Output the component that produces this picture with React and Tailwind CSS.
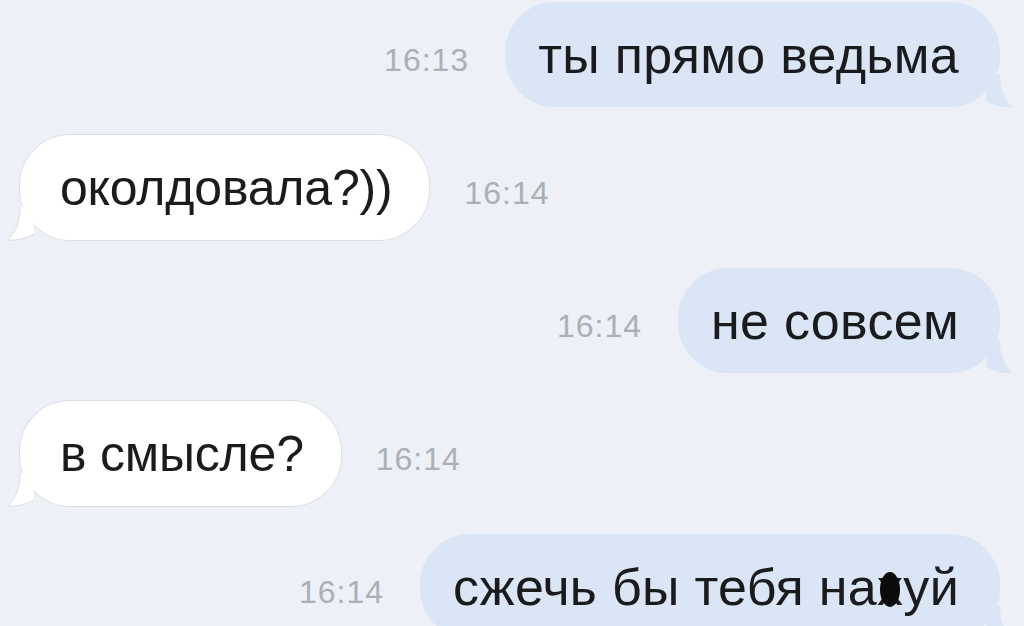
import React from 'react';

const messages = [
  { id: 1, out: true, text: 'ты прямо ведьма', time: '16:13' },
  { id: 2, out: false, text: 'околдовала?))', time: '16:14' },
  { id: 3, out: true, text: 'не совсем', time: '16:14' },
  { id: 4, out: false, text: 'в смысле?', time: '16:14' },
  { id: 5, out: true, text: 'сжечь бы тебя на', censored: 'х', rest: 'уй', time: '16:14' },
];

// little hook at the bottom corner of a bubble
const Tail = ({ out }) => {
  if (out) {
    return (
      <svg
        className="absolute right-[-13px] bottom-[-1px]"
        width="32"
        height="34"
        viewBox="0 0 32 34"
      >
        <path d="M6 0 L19 0 C19 14 23 26 32 33 C22 34 13 31 5 27 Z" fill="#dae5f5" />
      </svg>
    );
  }
  return (
    <svg
      className="absolute left-[-13px] bottom-[-1px]"
      width="32"
      height="34"
      viewBox="0 0 32 34"
    >
      <path d="M26 0 L13 0 C13 14 9 26 0 33 C10 34 19 31 27 27 Z" fill="#ffffff" />
      <path d="M13 0 C13 14 9 26 0.5 33 C10 34 19 31 27 27" fill="none" stroke="#dcdfe5" strokeWidth="1" />
    </svg>
  );
};

const Time = ({ value }) => (
  <span className="pt-[10px] font-['Liberation_Sans',Arial,sans-serif] text-[32px] leading-none text-[#abafb6] tracking-[1px]">
    {value}
  </span>
);

const Bubble = ({ msg }) => (
  <div
    className={
      msg.out
        ? 'relative h-[105px] flex items-center pl-[33px] pr-[41px] rounded-[50px] bg-[#dae5f5]'
        : 'relative h-[105px] flex items-center pl-[40px] pr-[37px] rounded-[50px] bg-white shadow-[0_0_0_1px_#dcdfe5]'
    }
  >
    <Tail out={msg.out} />
    <span
      className={
        msg.out
          ? "relative font-['Liberation_Sans',Arial,sans-serif] text-[52px] leading-none text-[#1a1b1d] tracking-[0.3px]"
          : "relative font-['Liberation_Sans',Arial,sans-serif] text-[50px] leading-none text-[#1a1b1d] tracking-[-0.2px]"
      }
    >
      {msg.text}
      {msg.censored && (
        <>
          <span className="relative inline-block">
            {msg.censored}
            <span className="absolute top-[11px] left-[3px] w-[20px] h-[35px] rounded-[50%] bg-[#0b0b0b]" />
          </span>
          {msg.rest}
        </>
      )}
    </span>
  </div>
);

const App = () => {
  return (
    <div className="w-[1024px] h-[626px] overflow-hidden bg-[#edf0f6] pt-[2px]">
      <div className="flex flex-col gap-[28px]">
        {messages.map((msg) =>
          msg.out ? (
            <div key={msg.id} className="flex items-center justify-end gap-[36px] pr-[24px]">
              <Time value={msg.time} />
              <Bubble msg={msg} />
            </div>
          ) : (
            <div key={msg.id} className="flex items-center justify-start gap-[35px] pl-[20px]">
              <Bubble msg={msg} />
              <Time value={msg.time} />
            </div>
          )
        )}
      </div>
    </div>
  );
};

export default App;
